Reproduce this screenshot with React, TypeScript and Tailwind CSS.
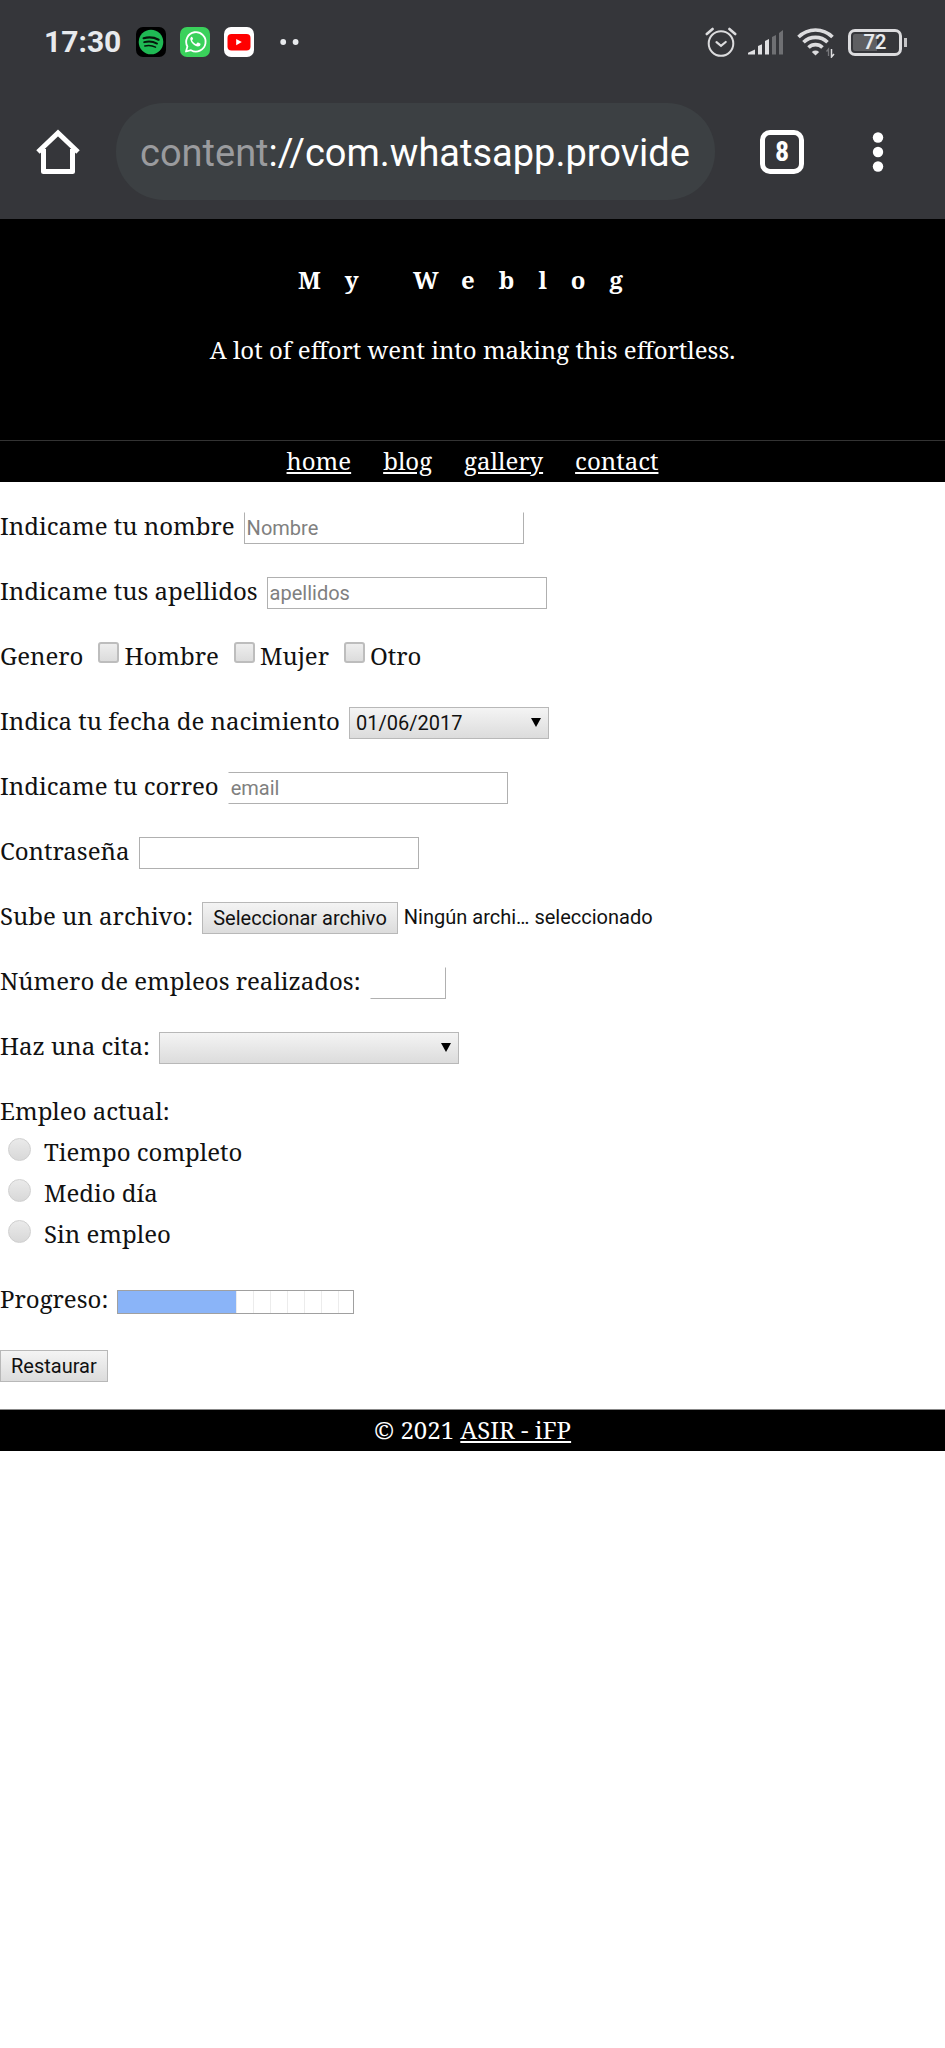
import type { ReactNode } from "react";

const control =
  "mt-[6px] h-8 rounded-none border border-[#b0b0b0] bg-white px-[2px] font-[family-name:Roboto,sans-serif] text-[20px] leading-none text-black placeholder:text-[#808080] placeholder:opacity-100";
const raised =
  "mt-[6px] h-8 rounded-none border border-[#b8b8b8] bg-linear-to-b from-[#f4f4f4] to-[#dcdcdc] font-[family-name:Roboto,sans-serif] text-[20px] leading-none text-[#111]";
const checkbox =
  "mt-[6px] size-[21px] appearance-none rounded-[3px] border-2 border-[#bdbdbd] bg-linear-to-b from-[#eeeeee] to-[#dcdcdc] checked:bg-[#555]";
const radio =
  "ml-2 mt-[6px] size-[23px] appearance-none rounded-full border border-[#cfcfcf] bg-linear-to-b from-[#eaeaea] to-[#d8d8d8] checked:bg-[#555]";

function Row({ children }: { children: ReactNode }) {
  return <div className="flex h-[41px] items-start gap-[9px]">{children}</div>;
}

function Drop({ id, className, value }: { id: string; className: string; value: string }) {
  return (
    <span className="relative flex">
      <select id={id} defaultValue={value} className={`${raised} appearance-none pl-[6px] pr-8 ${className}`}>
        <option value={value}>{value}</option>
      </select>
      <svg viewBox="0 0 10 9" className="pointer-events-none absolute right-2 top-[17px] h-[9px] w-[10px]">
        <path d="M0 0h10L5 9z" fill="#000" />
      </svg>
    </span>
  );
}

function StatusBar() {
  return (
    <div className="flex h-[84px] items-center justify-between pl-[44px] pr-[38px]">
      <div className="flex items-center">
        <span className="mr-[15px] text-[30px] font-bold leading-none text-[#e8eaed]">17:30</span>
        <svg viewBox="0 0 30 30" className="mr-[14px] size-[30px]">
          <rect width="30" height="30" rx="7" fill="#000" />
          <circle cx="15" cy="15" r="12.3" fill="#1fb954" />
          <g fill="none" stroke="#06150b" strokeLinecap="round">
            <path d="M7.6 11.2c5-1.4 10.600-.9 15 1.500" strokeWidth="2.200" />
            <path d="M8.200 15.200c4.400-1.200 9-.7 12.800 1.400" strokeWidth="1.900" />
            <path d="M8.800 18.900c3.800-.9 7.500-.5 10.700 1.200" strokeWidth="1.500" />
          </g>
        </svg>
        <svg viewBox="0 0 30 30" className="mr-[14px] size-[30px]">
          <rect width="30" height="30" rx="7" fill="#3ad15b" />
          <path
            d="M6 24.500l1.400-5A9.700 9.700 0 1 1 11 23.200z"
            fill="none"
            stroke="#fff"
            strokeWidth="1.800"
            strokeLinejoin="round"
          />
          <path
            d="M11.700 9.700c-.9.3-1.500 1.300-1.400 2.400.4 3.700 4.300 7.200 7.700 7.400 1.200 0 2.400-.8 2.500-2 .1-.5 0-.7-.4-.9l-2-1c-.4-.2-.7-.1-1 .3l-.7.900c-.2.200-.4.200-.7.100-1.600-.7-2.700-1.800-3.500-3.200-.1-.3-.1-.4.100-.7l.6-.8c.2-.3.200-.5.100-.8l-.8-1.500c-.1-.2-.3-.2-.5-.2z"
            fill="#fff"
          />
        </svg>
        <svg viewBox="0 0 30 30" className="mr-[26px] size-[30px]">
          <rect width="30" height="30" rx="7" fill="#fff" />
          <rect x="3.500" y="7" width="23" height="16.500" rx="4" fill="#f00" />
          <path d="M12.200 12v6.200l5.600-3.100z" fill="#fff" />
        </svg>
        <svg viewBox="0 0 20 8" className="h-2 w-5">
          <circle cx="3.200" cy="4" r="2.900" fill="#e8eaed" />
          <circle cx="15.600" cy="4" r="2.900" fill="#e8eaed" />
        </svg>
      </div>
      <div className="flex items-center">
        <svg viewBox="0 0 32 32" className="mr-[11px] size-8" fill="none" stroke="#dcdcde" strokeLinecap="round">
          <circle cx="16" cy="17.500" r="12.300" strokeWidth="2" />
          <path d="M11.500 16.200l4.500 3.600 4.700-3.800" strokeWidth="2.200" />
          <path d="M1.800 8L7.600 3M30.200 8l-5.800-5" strokeWidth="2.600" />
        </svg>
        <svg viewBox="0 0 36 28" className="mr-[13px] h-7 w-9">
          <path d="M0 26.500v-1.800l7-3.200v5zM10 26.500v-8.500l4-1.800v10.300zM17 26.500V13l4-2v15.500z" fill="#e0e0e2" />
          <path d="M24 26.500V9l4-2v19.500zM31 26.500V5l4-3v24.500z" fill="#6f7073" />
        </svg>
        <svg viewBox="0 0 38 32" className="mr-[13px] h-8 w-[38px]">
          <g fill="none" stroke="#dcdcde" strokeWidth="3.600">
            <path d="M1.500 11a24 24 0 0 1 34 0" />
            <path d="M6.500 16.300a17 17 0 0 1 24 0" />
            <path d="M11.500 21.500a10 10 0 0 1 14 0" />
          </g>
          <path d="M14.800 26a6 6 0 0 1 7.400 0l-3.700 3.400z" fill="#dcdcde" />
          <path d="M31.500 30v-7l-2 2.500" stroke="#77787b" strokeWidth="1.300" fill="none" />
          <path d="M34.500 23v8l2.500-3" stroke="#dcdcde" strokeWidth="1.500" fill="none" />
        </svg>
        <span className="flex items-center gap-[2px]">
          <span className="flex h-[27px] w-[54px] items-center justify-center rounded-[7px] border-[3px] border-[#dcdcde] bg-linear-to-r from-[#5e5f62] from-55% to-[#35363a] to-55% bg-clip-content p-[2px] text-[20px] font-semibold leading-none text-[#e8eaed]">
            72
          </span>
          <span className="h-[9px] w-[3px] bg-[#c4c4c6]" />
        </span>
      </div>
    </div>
  );
}

function Toolbar() {
  return (
    <div className="flex h-[135px] items-center pl-[36px] pr-[61px]">
      <button type="button" aria-label="Inicio" className="mr-[36px]">
        <svg viewBox="0 0 44 46" className="h-[46px] w-[44px]" fill="none" stroke="#fff" strokeWidth="5">
          <path d="M7.500 20v22.500h29V20" strokeLinejoin="round" />
          <path d="M2 23L22 4l20 19" />
        </svg>
      </button>
      <div className="flex h-[97px] min-w-0 flex-1 items-center rounded-[48px] bg-[#3c4043] pl-6 pr-6 pt-[2px]">
        <span className="overflow-hidden whitespace-nowrap text-[38px] leading-[50px] text-white">
          <span className="text-[#9a9b9e]">content</span>://com.whatsapp.provide
        </span>
      </div>
      <button
        type="button"
        aria-label="Pestañas"
        className="ml-[45px] flex h-[44px] w-[44px] items-center justify-center rounded-[10px] border-[5px] border-white font-[family-name:'Roboto_Condensed',Roboto,sans-serif] text-[28px] font-bold leading-none text-white"
      >
        8
      </button>
      <button type="button" aria-label="Menú" className="ml-[68px]">
        <svg viewBox="0 0 12 40" className="h-10 w-3" fill="#fff">
          <circle cx="6" cy="5.500" r="5.200" />
          <circle cx="6" cy="20" r="5.200" />
          <circle cx="6" cy="34.500" r="5.200" />
        </svg>
      </button>
    </div>
  );
}

export default function App() {
  return (
    <div className="min-h-screen bg-white font-[family-name:'Noto_Serif','DejaVu_Serif_Condensed','DejaVu_Serif',serif] text-[24px] leading-[39px] text-[#111]">
      <div className="bg-[#35363a] font-[family-name:Roboto,sans-serif]">
        <StatusBar />
        <Toolbar />
      </div>

      <header className="bg-black pb-[71px] pt-[41px] text-center text-white">
        <h1 className="font-bold tracking-[24px]">My Weblog</h1>
        <p className="mt-[31px]">A lot of effort went into making this effortless.</p>
      </header>
      <nav className="flex justify-center gap-8 border-t border-[#333] bg-black pb-[2px] text-white">
        <a href="#home" className="underline">home</a>
        <a href="#blog" className="underline">blog</a>
        <a href="#gallery" className="underline">gallery</a>
        <a href="#contact" className="underline">contact</a>
      </nav>

      <form className="flex flex-col gap-6 py-6">
        <Row>
          <label htmlFor="nombre">Indicame tu nombre</label>
          <input id="nombre" placeholder="Nombre" className={`${control} w-[280px] border-t-transparent`} />
        </Row>
        <Row>
          <label htmlFor="apellidos">Indicame tus apellidos</label>
          <input id="apellidos" placeholder="apellidos" className={`${control} w-[280px]`} />
        </Row>
        <fieldset className="flex h-[41px] items-start gap-[15px]">
          <span>Genero</span>
          {["Hombre", "Mujer", "Otro"].map((g) => (
            <label key={g} className="flex items-start gap-[5px]">
              <input type="checkbox" name={g} className={checkbox} />
              {g}
            </label>
          ))}
        </fieldset>
        <Row>
          <label htmlFor="fecha">Indica tu fecha de nacimiento</label>
          <Drop id="fecha" value="01/06/2017" className="w-[200px]" />
        </Row>
        <Row>
          <label htmlFor="correo">Indicame tu correo</label>
          <input id="correo" type="email" placeholder="email" className={`${control} w-[280px] border-l-transparent`} />
        </Row>
        <Row>
          <label htmlFor="clave">Contraseña</label>
          <input id="clave" type="password" className={`${control} w-[280px]`} />
        </Row>
        <Row>
          <span>Sube un archivo:</span>
          <span className="flex items-start gap-[6px]">
            <label htmlFor="archivo" className={`${raised} flex items-center px-[10px]`}>
              Seleccionar archivo
            </label>
            <input id="archivo" type="file" className="sr-only" />
            <span className="mt-[2px] font-[family-name:Roboto,sans-serif] text-[20px]">Ningún archi… seleccionado</span>
          </span>
        </Row>
        <Row>
          <label htmlFor="empleos">Número de empleos realizados:</label>
          <input id="empleos" type="number" className={`${control} w-[76px] border-l-transparent border-t-transparent`} />
        </Row>
        <Row>
          <label htmlFor="cita">Haz una cita:</label>
          <Drop id="cita" value="" className="w-[300px]" />
        </Row>
        <fieldset>
          <legend className="pb-[2px]">Empleo actual:</legend>
          {["Tiempo completo", "Medio día", "Sin empleo"].map((e) => (
            <label key={e} className="flex h-[41px] items-start gap-[13px]">
              <input type="radio" name="empleo" className={radio} />
              {e}
            </label>
          ))}
        </fieldset>
        <Row>
          <label htmlFor="progreso">Progreso:</label>
          <progress
            id="progreso"
            value={50}
            max={100}
            className="mt-[11px] h-6 w-[237px] appearance-none border border-[#a0a0a0] [&::-webkit-progress-bar]:bg-white [&::-webkit-progress-bar]:bg-[repeating-linear-gradient(to_right,transparent_0_16px,#ececec_16px_17px)] [&::-webkit-progress-value]:bg-[#8ab4f8]"
          />
        </Row>
        <Row>
          <button type="reset" className={`${raised} px-[10px]`}>Restaurar</button>
        </Row>
      </form>

      <footer className="border-t border-[#888] bg-black pb-[2px] text-center text-white">
        © 2021 <a href="#asir" className="underline">ASIR - iFP</a>
      </footer>
    </div>
  );
}
